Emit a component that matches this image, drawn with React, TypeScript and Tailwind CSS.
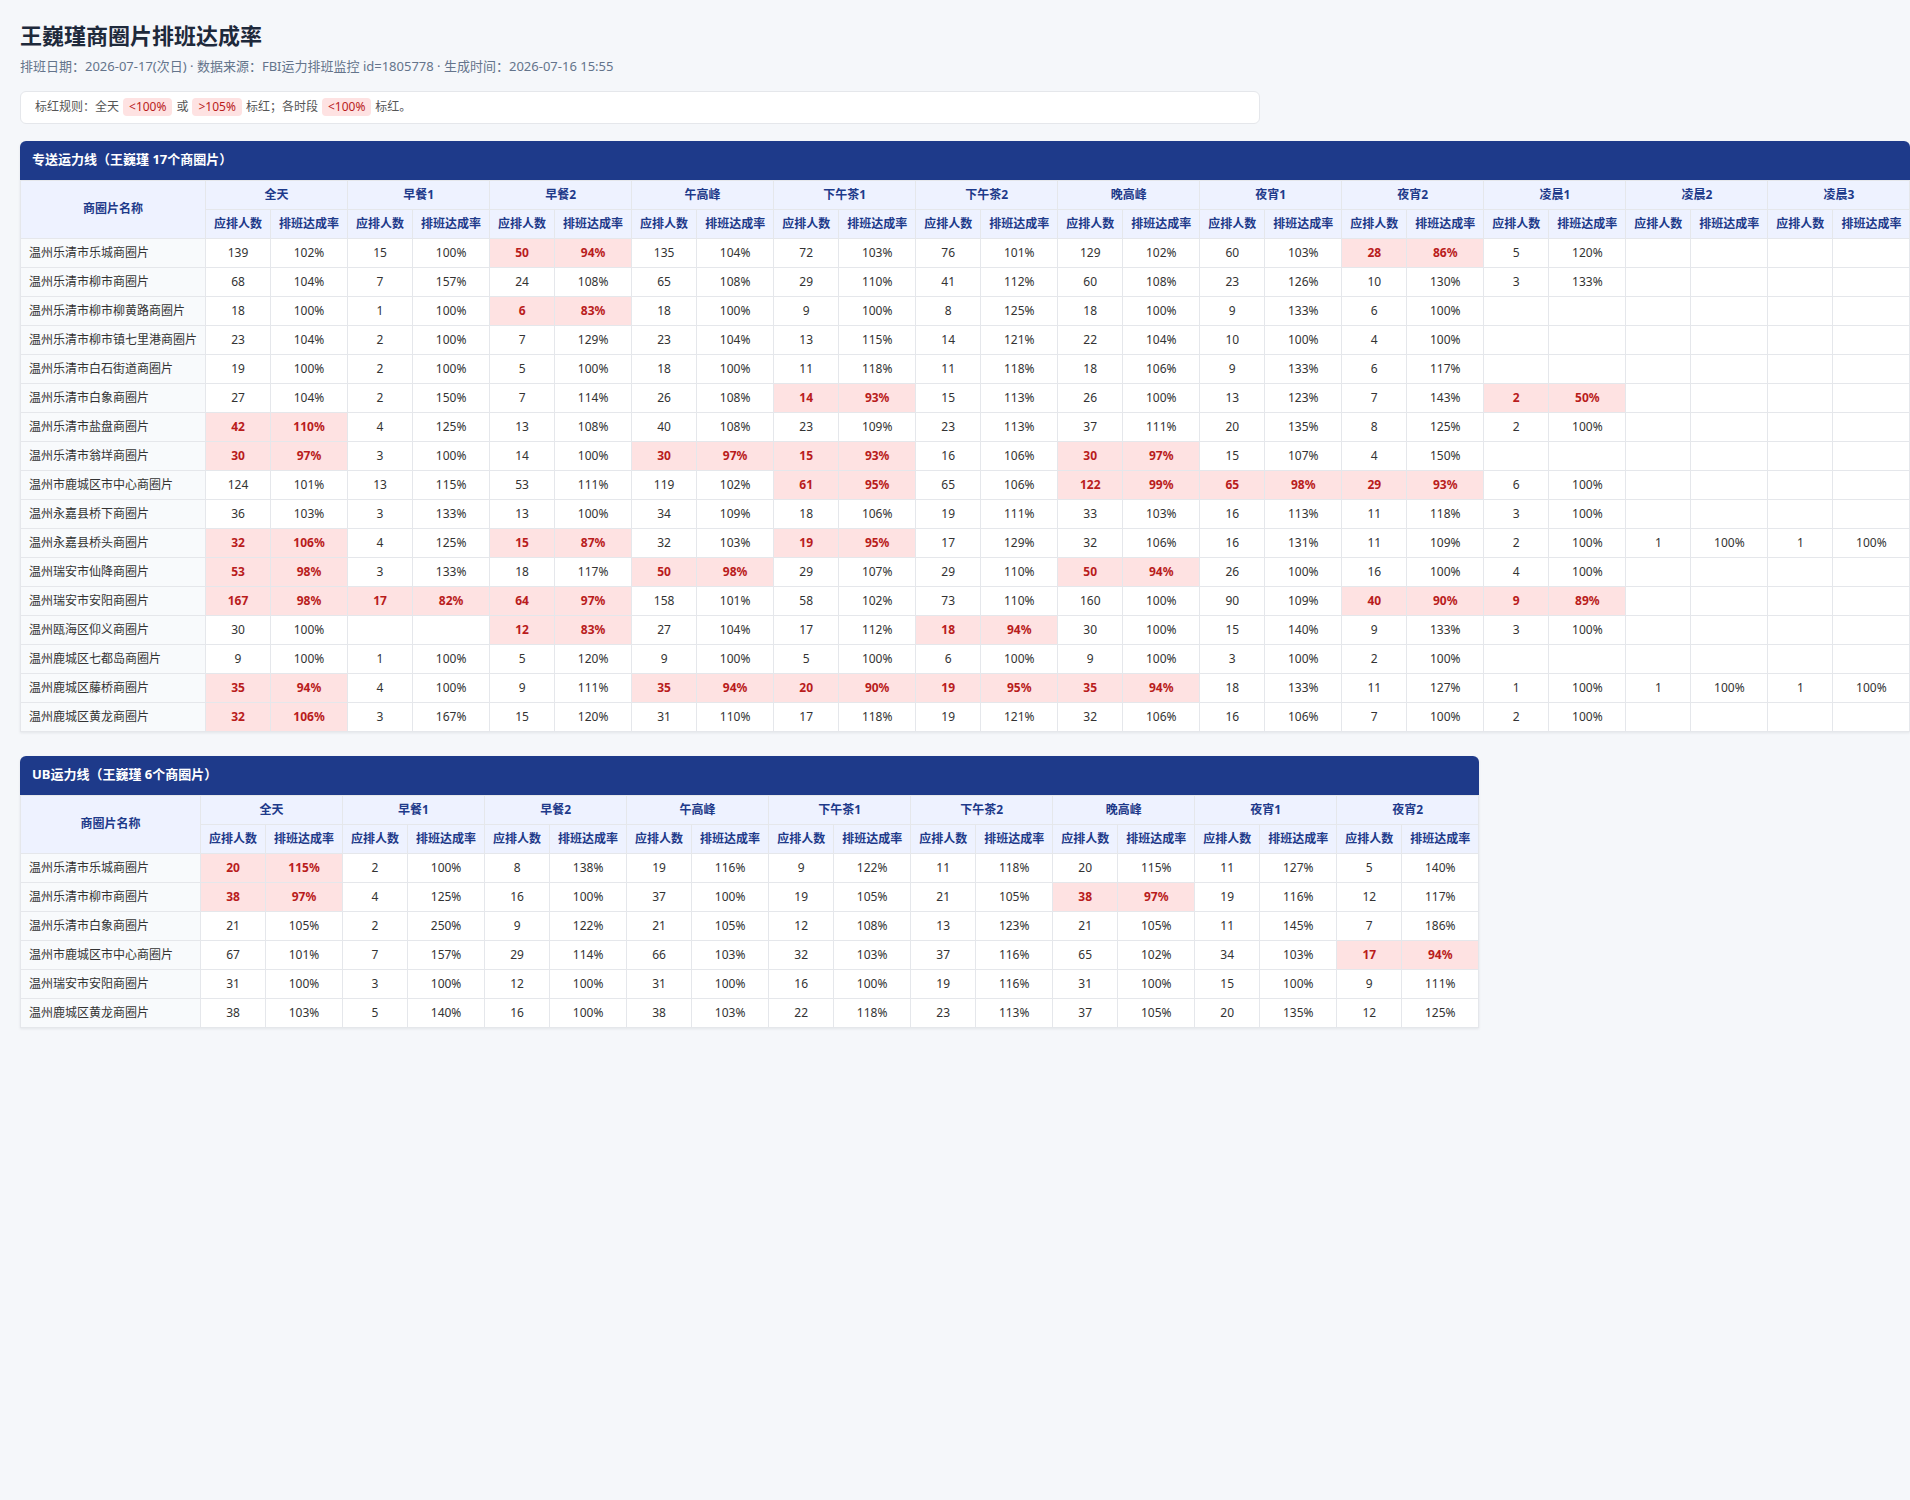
import React from 'react';

type Cell = [number, number] | null;
type Row = { name: string; cells: Cell[] };

const SLOTS_A = ['全天', '早餐1', '早餐2', '午高峰', '下午茶1', '下午茶2', '晚高峰', '夜宵1', '夜宵2', '凌晨1', '凌晨2', '凌晨3'];
const SLOTS_B = SLOTS_A.slice(0, 9);

const _ = null;

const rowsA: Row[] = [
  { name: '温州乐清市乐城商圈片', cells: [[139, 102], [15, 100], [50, 94], [135, 104], [72, 103], [76, 101], [129, 102], [60, 103], [28, 86], [5, 120], _, _] },
  { name: '温州乐清市柳市商圈片', cells: [[68, 104], [7, 157], [24, 108], [65, 108], [29, 110], [41, 112], [60, 108], [23, 126], [10, 130], [3, 133], _, _] },
  { name: '温州乐清市柳市柳黄路商圈片', cells: [[18, 100], [1, 100], [6, 83], [18, 100], [9, 100], [8, 125], [18, 100], [9, 133], [6, 100], _, _, _] },
  { name: '温州乐清市柳市镇七里港商圈片', cells: [[23, 104], [2, 100], [7, 129], [23, 104], [13, 115], [14, 121], [22, 104], [10, 100], [4, 100], _, _, _] },
  { name: '温州乐清市白石街道商圈片', cells: [[19, 100], [2, 100], [5, 100], [18, 100], [11, 118], [11, 118], [18, 106], [9, 133], [6, 117], _, _, _] },
  { name: '温州乐清市白象商圈片', cells: [[27, 104], [2, 150], [7, 114], [26, 108], [14, 93], [15, 113], [26, 100], [13, 123], [7, 143], [2, 50], _, _] },
  { name: '温州乐清市盐盘商圈片', cells: [[42, 110], [4, 125], [13, 108], [40, 108], [23, 109], [23, 113], [37, 111], [20, 135], [8, 125], [2, 100], _, _] },
  { name: '温州乐清市翁垟商圈片', cells: [[30, 97], [3, 100], [14, 100], [30, 97], [15, 93], [16, 106], [30, 97], [15, 107], [4, 150], _, _, _] },
  { name: '温州市鹿城区市中心商圈片', cells: [[124, 101], [13, 115], [53, 111], [119, 102], [61, 95], [65, 106], [122, 99], [65, 98], [29, 93], [6, 100], _, _] },
  { name: '温州永嘉县桥下商圈片', cells: [[36, 103], [3, 133], [13, 100], [34, 109], [18, 106], [19, 111], [33, 103], [16, 113], [11, 118], [3, 100], _, _] },
  { name: '温州永嘉县桥头商圈片', cells: [[32, 106], [4, 125], [15, 87], [32, 103], [19, 95], [17, 129], [32, 106], [16, 131], [11, 109], [2, 100], [1, 100], [1, 100]] },
  { name: '温州瑞安市仙降商圈片', cells: [[53, 98], [3, 133], [18, 117], [50, 98], [29, 107], [29, 110], [50, 94], [26, 100], [16, 100], [4, 100], _, _] },
  { name: '温州瑞安市安阳商圈片', cells: [[167, 98], [17, 82], [64, 97], [158, 101], [58, 102], [73, 110], [160, 100], [90, 109], [40, 90], [9, 89], _, _] },
  { name: '温州瓯海区仰义商圈片', cells: [[30, 100], _, [12, 83], [27, 104], [17, 112], [18, 94], [30, 100], [15, 140], [9, 133], [3, 100], _, _] },
  { name: '温州鹿城区七都岛商圈片', cells: [[9, 100], [1, 100], [5, 120], [9, 100], [5, 100], [6, 100], [9, 100], [3, 100], [2, 100], _, _, _] },
  { name: '温州鹿城区藤桥商圈片', cells: [[35, 94], [4, 100], [9, 111], [35, 94], [20, 90], [19, 95], [35, 94], [18, 133], [11, 127], [1, 100], [1, 100], [1, 100]] },
  { name: '温州鹿城区黄龙商圈片', cells: [[32, 106], [3, 167], [15, 120], [31, 110], [17, 118], [19, 121], [32, 106], [16, 106], [7, 100], [2, 100], _, _] },
];

const rowsB: Row[] = [
  { name: '温州乐清市乐城商圈片', cells: [[20, 115], [2, 100], [8, 138], [19, 116], [9, 122], [11, 118], [20, 115], [11, 127], [5, 140]] },
  { name: '温州乐清市柳市商圈片', cells: [[38, 97], [4, 125], [16, 100], [37, 100], [19, 105], [21, 105], [38, 97], [19, 116], [12, 117]] },
  { name: '温州乐清市白象商圈片', cells: [[21, 105], [2, 250], [9, 122], [21, 105], [12, 108], [13, 123], [21, 105], [11, 145], [7, 186]] },
  { name: '温州市鹿城区市中心商圈片', cells: [[67, 101], [7, 157], [29, 114], [66, 103], [32, 103], [37, 116], [65, 102], [34, 103], [17, 94]] },
  { name: '温州瑞安市安阳商圈片', cells: [[31, 100], [3, 100], [12, 100], [31, 100], [16, 100], [19, 116], [31, 100], [15, 100], [9, 111]] },
  { name: '温州鹿城区黄龙商圈片', cells: [[38, 103], [5, 140], [16, 100], [38, 103], [22, 118], [23, 113], [37, 105], [20, 135], [12, 125]] },
];

// 全天: <100% or >105% ; other slots: <100%
const isRed = (idx: number, rate: number) => (idx === 0 ? rate < 100 || rate > 105 : rate < 100);

const th = 'border border-[#e5e7eb] bg-[#eef2ff] px-2 py-1.5 font-bold text-[#1e3a8a] whitespace-nowrap';
const tdBase = 'border border-[#e5e7eb] px-2 py-1.5 text-center whitespace-nowrap';

const Badge = ({ children }: { children: React.ReactNode }) => (
  <span className="mx-1 rounded bg-[#fee2e2] px-1.5 py-px text-[#b91c1c]">{children}</span>
);

const ShiftTable = ({ title, slots, rows }: { title: string; slots: string[]; rows: Row[] }) => (
  <div className="w-fit overflow-hidden rounded-t-md bg-white shadow-[0_1px_3px_rgba(15,23,42,0.08)]">
    <div className="flex h-[39px] items-center bg-[#1e3a8a] px-3 text-[13px] font-bold text-white">{title}</div>
    <table className="border-collapse text-xs leading-4">
      <thead>
        <tr>
          <th rowSpan={2} className={`${th} min-w-[180px]`}>商圈片名称</th>
          {slots.map(s => (
            <th key={s} colSpan={2} className={th}>{s}</th>
          ))}
        </tr>
        <tr>
          {slots.map(s => (
            <React.Fragment key={s}>
              <th className={th}>应排人数</th>
              <th className={th}>排班达成率</th>
            </React.Fragment>
          ))}
        </tr>
      </thead>
      <tbody>
        {rows.map(r => (
          <tr key={r.name}>
            <td className="border border-[#e5e7eb] bg-[#f8fafc] px-2 py-1.5 text-left whitespace-nowrap text-[#333]">{r.name}</td>
            {r.cells.map((c, i) => {
              if (!c) {
                return (
                  <React.Fragment key={i}>
                    <td className={tdBase}></td>
                    <td className={tdBase}></td>
                  </React.Fragment>
                );
              }
              const red = isRed(i, c[1]);
              const cls = red ? `${tdBase} bg-[#fee2e2] font-bold text-[#b91c1c]` : `${tdBase} text-[#333]`;
              return (
                <React.Fragment key={i}>
                  <td className={cls}>{c[0]}</td>
                  <td className={cls}>{c[1]}%</td>
                </React.Fragment>
              );
            })}
          </tr>
        ))}
      </tbody>
    </table>
  </div>
);

export default function App() {
  return (
    <div className="min-h-screen bg-[#f5f7fa] p-5 font-['Noto_Sans','Noto_Sans_CJK_SC',sans-serif] text-[#333]">
      <h1 className="text-[22px] font-bold leading-[30px] text-[#1e293b]">王巍瑾商圈片排班达成率</h1>
      <p className="mt-[7px] text-[13px] text-[#64748b]">
        排班日期：2026-07-17(次日) · 数据来源：FBI运力排班监控 id=1805778 · 生成时间：2026-07-16 15:55
      </p>
      <div className="mt-[14px] flex h-[33px] w-[1240px] items-center rounded-md border border-[#e5e7eb] bg-white px-3.5 text-xs text-[#555]">
        标红规则：全天<Badge>&lt;100%</Badge>或<Badge>&gt;105%</Badge>标红；各时段<Badge>&lt;100%</Badge>标红。
      </div>
      <div className="mt-[17px]">
        <ShiftTable title="专送运力线（王巍瑾 17个商圈片）" slots={SLOTS_A} rows={rowsA} />
      </div>
      <div className="mt-6">
        <ShiftTable title="UB运力线（王巍瑾 6个商圈片）" slots={SLOTS_B} rows={rowsB} />
      </div>
    </div>
  );
}
